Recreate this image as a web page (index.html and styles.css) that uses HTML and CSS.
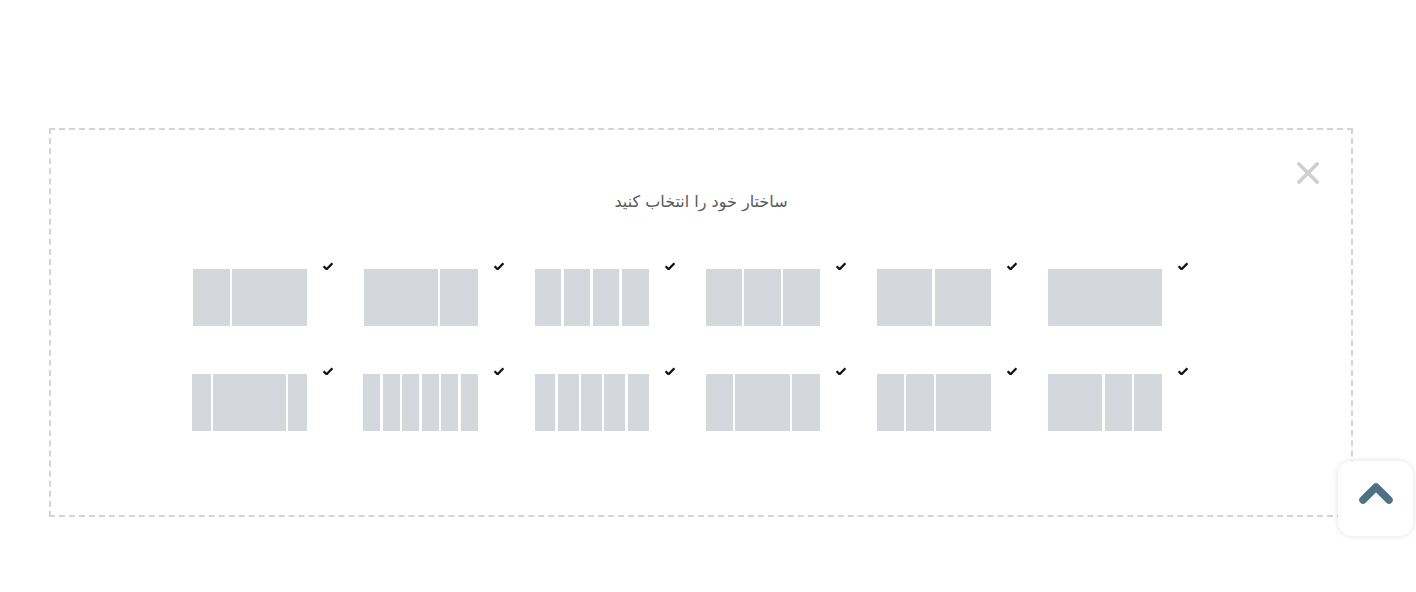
FILE: index.html
```html
<!DOCTYPE html>
<html lang="fa" dir="rtl">
<head>
<meta charset="utf-8">
<title>ساختار</title>
<link rel="stylesheet" href="styles.css">
</head>
<body>
<div class="picker">
  <button class="close" aria-label="بستن">
    <svg width="22" height="22" viewBox="0 0 22 22"><path d="M2 2 L20 20 M20 2 L2 20" stroke="#cfcfcf" stroke-width="3.6" stroke-linecap="square"/></svg>
  </button>
  <h2 class="title">ساختار خود را انتخاب کنید</h2>
  <div class="grid">
    <div class="item"><div class="cols"><span class="c" style="flex-grow:1"></span></div><svg class="check" viewBox="0 0 10 8"><path d="M0.6 4.2 L3.6 7.2 L9.4 1.2" fill="none" stroke="#111" stroke-width="2.3"/></svg></div>
    <div class="item"><div class="cols"><span class="c" style="flex-grow:1"></span><span class="c" style="flex-grow:1"></span></div><svg class="check" viewBox="0 0 10 8"><path d="M0.6 4.2 L3.6 7.2 L9.4 1.2" fill="none" stroke="#111" stroke-width="2.3"/></svg></div>
    <div class="item"><div class="cols"><span class="c" style="flex-grow:1"></span><span class="c" style="flex-grow:1"></span><span class="c" style="flex-grow:1"></span></div><svg class="check" viewBox="0 0 10 8"><path d="M0.6 4.2 L3.6 7.2 L9.4 1.2" fill="none" stroke="#111" stroke-width="2.3"/></svg></div>
    <div class="item"><div class="cols"><span class="c" style="flex-grow:1"></span><span class="c" style="flex-grow:1"></span><span class="c" style="flex-grow:1"></span><span class="c" style="flex-grow:1"></span></div><svg class="check" viewBox="0 0 10 8"><path d="M0.6 4.2 L3.6 7.2 L9.4 1.2" fill="none" stroke="#111" stroke-width="2.3"/></svg></div>
    <div class="item"><div class="cols"><span class="c" style="flex-grow:1"></span><span class="c" style="flex-grow:2"></span></div><svg class="check" viewBox="0 0 10 8"><path d="M0.6 4.2 L3.6 7.2 L9.4 1.2" fill="none" stroke="#111" stroke-width="2.3"/></svg></div>
    <div class="item"><div class="cols"><span class="c" style="flex-grow:2"></span><span class="c" style="flex-grow:1"></span></div><svg class="check" viewBox="0 0 10 8"><path d="M0.6 4.2 L3.6 7.2 L9.4 1.2" fill="none" stroke="#111" stroke-width="2.3"/></svg></div>

    <div class="item"><div class="cols"><span class="c" style="flex-grow:1"></span><span class="c" style="flex-grow:1"></span><span class="c" style="flex-grow:2"></span></div><svg class="check" viewBox="0 0 10 8"><path d="M0.6 4.2 L3.6 7.2 L9.4 1.2" fill="none" stroke="#111" stroke-width="2.3"/></svg></div>
    <div class="item"><div class="cols"><span class="c" style="flex-grow:2"></span><span class="c" style="flex-grow:1"></span><span class="c" style="flex-grow:1"></span></div><svg class="check" viewBox="0 0 10 8"><path d="M0.6 4.2 L3.6 7.2 L9.4 1.2" fill="none" stroke="#111" stroke-width="2.3"/></svg></div>
    <div class="item"><div class="cols"><span class="c" style="flex-grow:1"></span><span class="c" style="flex-grow:2"></span><span class="c" style="flex-grow:1"></span></div><svg class="check" viewBox="0 0 10 8"><path d="M0.6 4.2 L3.6 7.2 L9.4 1.2" fill="none" stroke="#111" stroke-width="2.3"/></svg></div>
    <div class="item"><div class="cols"><span class="c" style="flex-grow:1"></span><span class="c" style="flex-grow:1"></span><span class="c" style="flex-grow:1"></span><span class="c" style="flex-grow:1"></span><span class="c" style="flex-grow:1"></span></div><svg class="check" viewBox="0 0 10 8"><path d="M0.6 4.2 L3.6 7.2 L9.4 1.2" fill="none" stroke="#111" stroke-width="2.3"/></svg></div>
    <div class="item"><div class="cols"><span class="c" style="flex-grow:1"></span><span class="c" style="flex-grow:1"></span><span class="c" style="flex-grow:1"></span><span class="c" style="flex-grow:1"></span><span class="c" style="flex-grow:1"></span><span class="c" style="flex-grow:1"></span></div><svg class="check" viewBox="0 0 10 8"><path d="M0.6 4.2 L3.6 7.2 L9.4 1.2" fill="none" stroke="#111" stroke-width="2.3"/></svg></div>
    <div class="item"><div class="cols"><span class="c" style="flex-grow:1"></span><span class="c" style="flex-grow:4"></span><span class="c" style="flex-grow:1"></span></div><svg class="check" viewBox="0 0 10 8"><path d="M0.6 4.2 L3.6 7.2 L9.4 1.2" fill="none" stroke="#111" stroke-width="2.3"/></svg></div>
  </div>
</div>
<button class="to-top" aria-label="بالا">
  <svg width="34" height="24" viewBox="0 0 34 24"><path d="M4 20 L17 7 L30 20" fill="none" stroke="#4e7185" stroke-width="7.5" stroke-linecap="round" stroke-linejoin="round"/></svg>
</button>
</body>
</html>
```

FILE: styles.css
```css
html, body {
  margin: 0;
  padding: 0;
  background: #fff;
}
body {
  font-family: "DejaVu Sans", "Noto Sans", sans-serif;
  padding-top: 128px;
  height: 592px;
  box-sizing: border-box;
  overflow: hidden;
}
.picker {
  position: relative;
  margin: 0 63px 0 49px;
  border: 2px dashed #d4d4d4;
  padding: 60px 0 84px;
}
.close {
  position: absolute;
  top: 32px;
  right: 32px;
  width: 22px;
  height: 22px;
  padding: 0;
  border: 0;
  background: none;
  display: flex;
}
.title {
  margin: 0;
  font-size: 16px;
  font-weight: normal;
  line-height: 24px;
  height: 24px;
  color: #5a5a5a;
  text-align: center;
}
.grid {
  margin-top: 55px;
  display: grid;
  grid-template-columns: repeat(6, 114px);
  column-gap: 57px;
  row-gap: 48px;
  justify-content: center;
  padding-right: 48px;
}
.item {
  position: relative;
  width: 114px;
  height: 57px;
}
.cols {
  display: flex;
  gap: 2.5px;
  height: 100%;
}
.c {
  flex-basis: 0;
  background: #d4d8dc;
}
.check {
  position: absolute;
  top: -7px;
  left: 130px;
  width: 10px;
  height: 8px;
}
.to-top {
  position: fixed;
  left: 1338px;
  top: 461px;
  width: 75px;
  height: 75px;
  border: 0;
  border-radius: 14px;
  background: #fff;
  box-shadow: 0 0 6px rgba(0, 0, 0, 0.12);
  display: flex;
  align-items: center;
  justify-content: center;
  padding: 0 0 14px;
}
```
